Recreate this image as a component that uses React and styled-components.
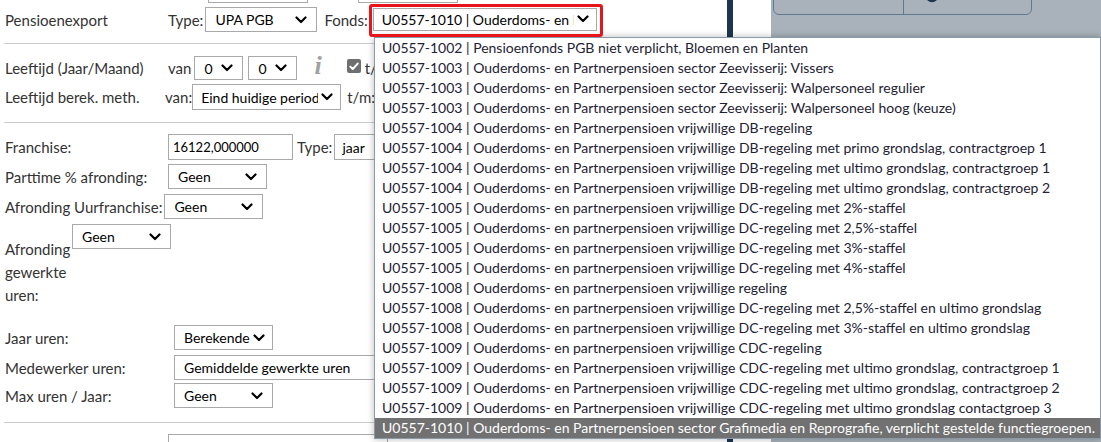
import React from "react";
import styled, { createGlobalStyle } from "styled-components";

const GlobalStyle = createGlobalStyle`
  html, body {
    margin: 0;
    padding: 0;
    background: #fff;
    overflow: hidden;
  }
  body {
    font-family: Lato, "Open Sans", sans-serif;
    font-size: 14px;
    color: #333;
  }
`;

const Page = styled.div`
  position: relative;
  display: grid;
  grid-template-columns: 727px 6px 38px 1fr;
  height: 442px;
  overflow: hidden;
`;

const FormPane = styled.div`
  padding-left: 5px;
  overflow: hidden;
`;

const NavyRule = styled.div`
  background: #1c3550;
`;

const Gutter = styled.div`
  background: #fff;
`;

const SidePanel = styled.div`
  background: #a9b2ba;
  padding-left: 2px;
`;

const ButtonGroup = styled.div`
  display: flex;
  width: 259px;
  height: 26px;
  margin-top: -11px;
  border: 1px solid #5f7a90;
  border-radius: 0 0 6px 6px;
  box-sizing: border-box;
`;

const GroupButton = styled.div`
  flex: 0 0 ${(p) => p.$w}px;
  display: flex;
  justify-content: flex-start;
  padding-left: ${(p) => p.$pl || 0}px;
  border-right: ${(p) => (p.$divider ? "1px solid #5f7a90" : "none")};
  box-sizing: border-box;
`;

const Row = styled.div`
  display: flex;
  align-items: ${(p) => p.$align || "center"};
  height: ${(p) => p.$h || 25}px;
  margin-top: ${(p) => p.$mt || 0}px;
  white-space: nowrap;
`;

const Label = styled.span`
  flex: 0 0 ${(p) => (p.$w ? `${p.$w}px` : "auto")};
  font-size: 15px;
  color: #333;
  white-space: ${(p) => (p.$wrap ? "normal" : "nowrap")};
  line-height: ${(p) => (p.$wrap ? "23px" : "normal")};
  padding-top: ${(p) => p.$pt || 0}px;
  margin-right: ${(p) => p.$mr || 0}px;
`;

const Inline = styled.span`
  margin: 0 ${(p) => p.$mr ?? 4}px 0 ${(p) => p.$ml || 0}px;
  font-size: 15px;
  color: #333;
`;

const Divider = styled.hr`
  border: 0;
  border-top: 1px solid #ccc;
  height: 0;
  margin: ${(p) => p.$mt}px 0 0 -1px;
`;

const Box = styled.div`
  display: inline-flex;
  align-items: center;
  box-sizing: border-box;
  flex: 0 0 ${(p) => p.$w}px;
  width: ${(p) => p.$w}px;
  height: ${(p) => p.$h || 25}px;
  border: 1px solid #a9a9a9;
  background: #fff;
  padding: 0 ${(p) => p.$pr || 9}px 0 ${(p) => p.$pl || 9}px;
  margin-left: ${(p) => p.$ml || 0}px;
  color: #000;
  font-size: ${(p) => p.$fs || 14}px;
`;

const BoxText = styled.span`
  flex: 1;
  overflow: hidden;
  white-space: nowrap;
`;

const Chevron = () => (
  <svg width="12" height="8" viewBox="0 0 12 8" style={{ flex: "none", marginLeft: 3 }}>
    <path d="M1.5 1.5 L6 6 L10.5 1.5" fill="none" stroke="#000" strokeWidth="2.2" strokeLinecap="round" strokeLinejoin="round" />
  </svg>
);

const Select = ({ w, h, value, ml, pl, pr }) => (
  <Box $w={w} $h={h} $ml={ml} $pl={pl} $pr={pr}>
    <BoxText>{value}</BoxText>
    <Chevron />
  </Box>
);

const Highlight = styled.span`
  position: relative;
  z-index: 3;
  display: inline-flex;
  margin-top: 1px;
  padding: 1px 3px 3px 1px;
  border: 3px solid #e8141a;
  border-radius: 3px;
`;

const InfoGlyph = styled.span`
  font-family: "Liberation Serif", serif;
  font-style: italic;
  font-weight: bold;
  font-size: 26px;
  color: #a0a0a0;
  margin: -4px 0 0 17px;
`;

const Check = styled.span`
  display: inline-flex;
  align-items: center;
  justify-content: center;
  width: 14px;
  height: 14px;
  margin: -4px 4px 0 25px;
  border-radius: 2px;
  background: #6f6f6f;
`;

const Dropdown = styled.ul`
  position: absolute;
  z-index: 2;
  left: 374px;
  top: 37px;
  width: 727px;
  margin: 0;
  padding: 0;
  list-style: none;
  background: #fff;
  border: 1px solid #8a9aa8;
  box-sizing: border-box;
  box-shadow: 0 0 7px rgba(0, 0, 0, 0.28);
`;

const Option = styled.li`
  height: 20px;
  line-height: 20px;
  padding-left: 7px;
  white-space: nowrap;
  overflow: hidden;
  color: ${(p) => (p.$active ? "#fff" : "#1e2233")};
  background: ${(p) => (p.$active ? "#717171" : "transparent")};
`;

const funds = [
  "U0557-1002 | Pensioenfonds PGB niet verplicht, Bloemen en Planten",
  "U0557-1003 | Ouderdoms- en Partnerpensioen sector Zeevisserij: Vissers",
  "U0557-1003 | Ouderdoms- en Partnerpensioen sector Zeevisserij: Walpersoneel regulier",
  "U0557-1003 | Ouderdoms- en Partnerpensioen sector Zeevisserij: Walpersoneel hoog (keuze)",
  "U0557-1004 | Ouderdoms- en Partnerpensioen vrijwillige DB-regeling",
  "U0557-1004 | Ouderdoms- en Partnerpensioen vrijwillige DB-regeling met primo grondslag, contractgroep 1",
  "U0557-1004 | Ouderdoms- en Partnerpensioen vrijwillige DB-regeling met ultimo grondslag, contractgroep 1",
  "U0557-1004 | Ouderdoms- en Partnerpensioen vrijwillige DB-regeling met ultimo grondslag, contractgroep 2",
  "U0557-1005 | Ouderdoms- en partnerpensioen vrijwillige DC-regeling met 2%-staffel",
  "U0557-1005 | Ouderdoms- en partnerpensioen vrijwillige DC-regeling met 2,5%-staffel",
  "U0557-1005 | Ouderdoms- en partnerpensioen vrijwillige DC-regeling met 3%-staffel",
  "U0557-1005 | Ouderdoms- en partnerpensioen vrijwillige DC-regeling met 4%-staffel",
  "U0557-1008 | Ouderdoms- en partnerpensioen vrijwillige regeling",
  "U0557-1008 | Ouderdoms- en partnerpensioen vrijwillige DC-regeling met 2,5%-staffel en ultimo grondslag",
  "U0557-1008 | Ouderdoms- en partnerpensioen vrijwillige DC-regeling met 3%-staffel en ultimo grondslag",
  "U0557-1009 | Ouderdoms- en partnerpensioen vrijwillige CDC-regeling",
  "U0557-1009 | Ouderdoms- en Partnerpensioen vrijwillige CDC-regeling met ultimo grondslag, contractgroep 1",
  "U0557-1009 | Ouderdoms- en Partnerpensioen vrijwillige CDC-regeling met ultimo grondslag, contractgroep 2",
  "U0557-1009 | Ouderdoms- en Partnerpensioen vrijwillige CDC-regeling met ultimo grondslag contactgroep 3",
  "U0557-1010 | Ouderdoms- en Partnerpensioen sector Grafimedia en Reprografie, verplicht gestelde functiegroepen.",
];

const selected = funds.length - 1;

export default function App() {
  return (
    <>
      <GlobalStyle />
      <Page>
        <FormPane>
          {/* previous section, scrolled mostly out of view */}
          <Row $h={26} $mt={-23}>
            <Box $w={100} $h={26} $ml={203} />
            <Box $w={100} $h={26} $ml={50} />
          </Row>

          <Row $mt={4}>
            <Label $w={163}>Pensioenexport</Label>
            <Inline $mr={2}>Type:</Inline>
            <Select w={112} value="UPA PGB" />
            <Inline $ml={7} $mr={1}>Fonds:</Inline>
            <Highlight>
              <Select w={224} h={23} value="U0557-1010 | Ouderdoms- en Partnerpensioen sector Grafimedia" pl={8} pr={7} />
            </Highlight>
          </Row>

          <Divider $mt={11} />

          <Row $h={24} $mt={12}>
            <Label $w={163}>Leeftijd (Jaar/Maand)</Label>
            <Inline $mr={3}>van</Inline>
            <Select w={49} h={24} value="0" />
            <Select w={49} h={24} value="0" ml={5} />
            <InfoGlyph>i</InfoGlyph>
            <Check>
              <svg width="10" height="9" viewBox="0 0 10 9">
                <path d="M1.3 4.6 L3.8 7 L8.7 1.6" fill="none" stroke="#fff" strokeWidth="2" strokeLinecap="round" strokeLinejoin="round" />
              </svg>
            </Check>
            <Inline>t/m</Inline>
          </Row>

          <Row $h={26} $mt={4}>
            <Label $w={160}>Leeftijd berek. meth.</Label>
            <Inline $mr={0}>van:</Inline>
            <Select w={149} h={26} value="Eind huidige periode" pl={8} pr={7} />
            <Inline $ml={6}>t/m:</Inline>
          </Row>

          <Divider $mt={12} />

          <Row $h={26} $mt={11}>
            <Label $w={163}>Franchise:</Label>
            <Box $w={125} $h={26} $pl={4} $fs={13}>16122,000000</Box>
            <Inline $ml={4} $mr={2}>Type:</Inline>
            <Select w={100} h={26} value="jaar" pl={7} />
          </Row>

          <Row $mt={4}>
            <Label $w={163}>Parttime % afronding:</Label>
            <Select w={99} value="Geen" />
          </Row>

          <Row $mt={5}>
            <Label $mr={2}>Afronding Uurfranchise:</Label>
            <Select w={99} value="Geen" />
          </Row>

          <Row $h={84} $mt={5} $align="flex-start">
            <Label $w={67} $wrap $pt={14}>Afronding gewerkte uren:</Label>
            <Select w={99} value="Geen" />
          </Row>

          <Row $mt={17}>
            <Label $w={169}>Jaar uren:</Label>
            <Select w={99} value="Berekende uren" pl={9} pr={7} />
          </Row>

          <Row $mt={5}>
            <Label $w={169}>Medewerker uren:</Label>
            <Select w={230} value="Gemiddelde gewerkte uren" />
          </Row>

          <Row $mt={3}>
            <Label $w={169}>Max uren / Jaar:</Label>
            <Select w={99} value="Geen" />
          </Row>

          <Divider $mt={14} />

          <Row $h={26} $mt={11}>
            <Label $w={163} />
            <Box $w={220} $h={26} />
          </Row>
        </FormPane>

        <NavyRule />
        <Gutter />

        <SidePanel>
          <ButtonGroup>
            <GroupButton $w={130} $pl={18} $divider>
              <svg width="10" height="14" viewBox="0 0 10 14" style={{ marginTop: -1 }}>
                <circle cx="5" cy="7" r="4" fill="#1c3550" />
              </svg>
            </GroupButton>
            <GroupButton $w={127} $pl={22}>
              <svg width="12" height="14" viewBox="0 0 12 14" style={{ marginTop: -1 }}>
                <circle cx="6" cy="7" r="5" fill="none" stroke="#1c3550" strokeWidth="2.4" />
              </svg>
            </GroupButton>
          </ButtonGroup>
        </SidePanel>

        <Dropdown>
          {funds.map((f, i) => (
            <Option key={i} $active={i === selected}>
              {f}
            </Option>
          ))}
        </Dropdown>
      </Page>
    </>
  );
}
